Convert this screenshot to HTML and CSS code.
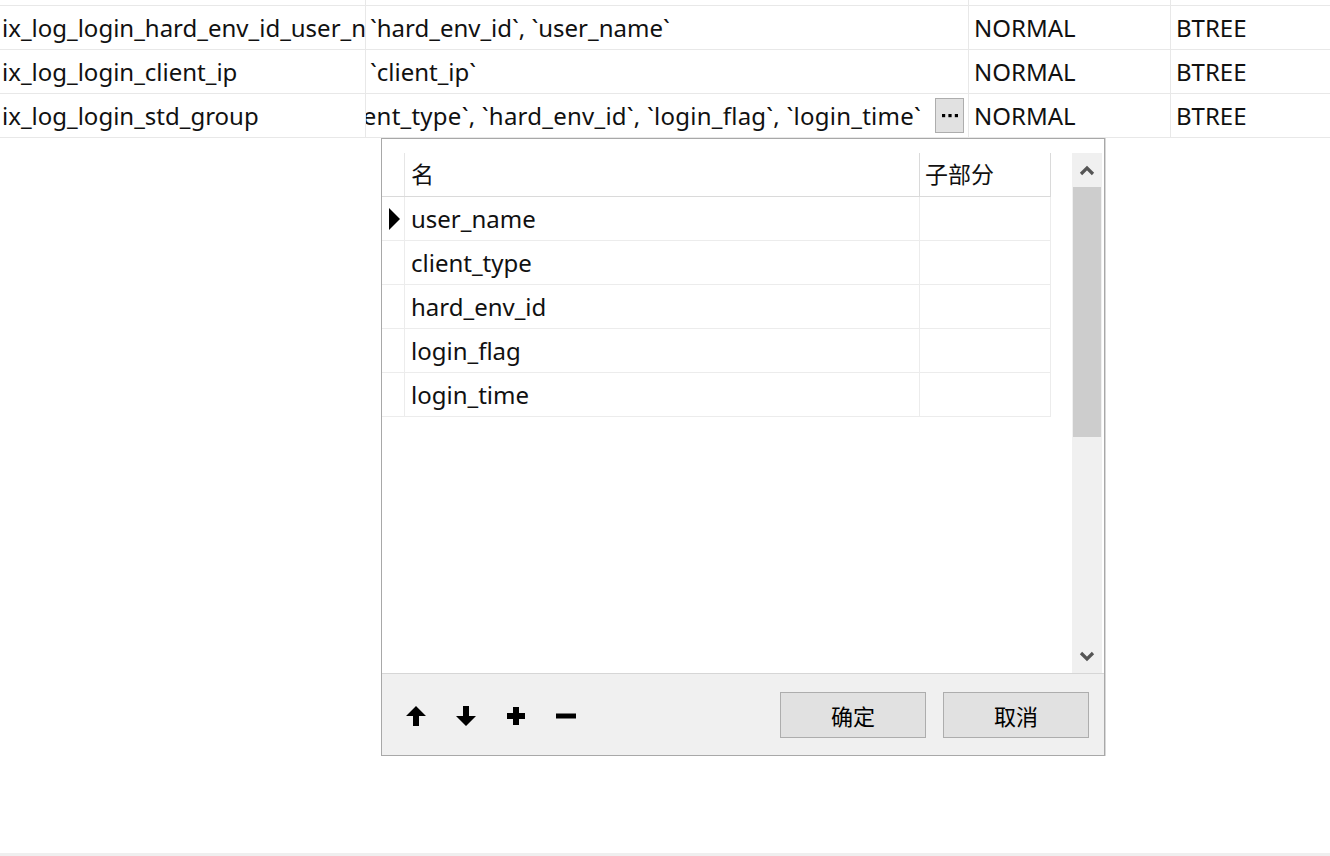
FILE: index.html
```html
<!DOCTYPE html>
<html lang="zh">
<head>
<meta charset="utf-8">
<title>索引字段</title>
<link rel="stylesheet" href="styles.css">
</head>
<body>
<div class="page">
  <div class="idx-table">
    <div class="row row-cut">
      <div class="cell c1"></div><div class="cell c2"></div><div class="cell c3"></div><div class="cell c4"></div>
    </div>
    <div class="row">
      <div class="cell c1"><span class="clip">ix_log_login_hard_env_id_user_name</span></div>
      <div class="cell c2">`hard_env_id`, `user_name`</div>
      <div class="cell c3">NORMAL</div>
      <div class="cell c4">BTREE</div>
    </div>
    <div class="row">
      <div class="cell c1">ix_log_login_client_ip</div>
      <div class="cell c2">`client_ip`</div>
      <div class="cell c3">NORMAL</div>
      <div class="cell c4">BTREE</div>
    </div>
    <div class="row">
      <div class="cell c1">ix_log_login_std_group</div>
      <div class="cell c2 c2-edit">
        <span class="edit-text">`user_name`, `client_type`, `hard_env_id`, `login_flag`, `login_time`</span>
        <span class="dots-btn"><svg width="16" height="4" viewBox="0 0 16 4"><rect x="0" y="0" width="3.2" height="3.2" fill="#000"/><rect x="6.4" y="0" width="3.2" height="3.2" fill="#000"/><rect x="12.8" y="0" width="3.2" height="3.2" fill="#000"/></svg></span>
      </div>
      <div class="cell c3">NORMAL</div>
      <div class="cell c4">BTREE</div>
    </div>
  </div>
  <div class="spacer"></div>
  <div class="bottom-strip"></div>
</div>

<div class="dialog">
  <div class="dlg-body">
    <div class="fields">
      <div class="frow fhead">
        <div class="fc ind"></div>
        <div class="fc name">名</div>
        <div class="fc sub">子部分</div>
      </div>
      <div class="frow">
        <div class="fc ind"><span class="tri"></span></div>
        <div class="fc name">user_name</div>
        <div class="fc sub"></div>
      </div>
      <div class="frow">
        <div class="fc ind"></div>
        <div class="fc name">client_type</div>
        <div class="fc sub"></div>
      </div>
      <div class="frow">
        <div class="fc ind"></div>
        <div class="fc name">hard_env_id</div>
        <div class="fc sub"></div>
      </div>
      <div class="frow">
        <div class="fc ind"></div>
        <div class="fc name">login_flag</div>
        <div class="fc sub"></div>
      </div>
      <div class="frow">
        <div class="fc ind"></div>
        <div class="fc name">login_time</div>
        <div class="fc sub"></div>
      </div>
    </div>
    <div class="vscroll">
      <div class="sb-btn">
        <svg width="16" height="11" viewBox="0 0 16 11"><path d="M2 9 L8 3 L14 9" fill="none" stroke="#555" stroke-width="3.2"/></svg>
      </div>
      <div class="sb-thumb"></div>
      <div class="sb-track"></div>
      <div class="sb-btn">
        <svg width="16" height="11" viewBox="0 0 16 11"><path d="M2 2 L8 8 L14 2" fill="none" stroke="#555" stroke-width="3.2"/></svg>
      </div>
    </div>
  </div>
  <div class="dlg-foot">
    <div class="tools">
      <svg class="tool" width="22" height="22" viewBox="0 0 22 22"><path d="M11 1 L21 11 L14 11 L14 21 L8 21 L8 11 L1 11 Z" fill="#000"/></svg>
      <svg class="tool" width="22" height="22" viewBox="0 0 22 22"><path d="M11 21 L21 11 L14 11 L14 1 L8 1 L8 11 L1 11 Z" fill="#000"/></svg>
      <svg class="tool" width="22" height="22" viewBox="0 0 22 22"><path d="M8 2 H14 V8 H20 V14 H14 V20 H8 V14 H2 V8 H8 Z" fill="#000"/></svg>
      <svg class="tool" width="22" height="22" viewBox="0 0 22 22"><rect x="1" y="8.5" width="20" height="5" fill="#000"/></svg>
    </div>
    <div class="btns">
      <button class="btn">确定</button>
      <button class="btn">取消</button>
    </div>
  </div>
</div>
</body>
</html>
```

FILE: styles.css
```css
* { box-sizing: border-box; }
html, body { margin: 0; padding: 0; }
body {
  width: 1330px;
  height: 856px;
  overflow: hidden;
  background: #ffffff;
  color: #111;
  font-family: "Noto Sans", "Noto Sans CJK SC", sans-serif;
  font-size: 24px;
}
.page {
  height: 856px;
  display: flex;
  flex-direction: column;
}
.idx-table { display: flex; flex-direction: column; }
.row {
  display: flex;
  height: 44px;
  border-bottom: 1px solid #e8e8e8;
}
.row-cut { height: 6px; }
.cell {
  height: 100%;
  display: flex;
  align-items: center;
  white-space: nowrap;
  overflow: hidden;
  border-right: 1px solid #e8e8e8;
}
.clip { overflow: hidden; white-space: nowrap; min-width: 0; }
.c1 { width: 366px; padding-left: 2px; }
.c2 { width: 603px; padding-left: 4px; }
.c3 { width: 202px; padding-left: 5px; }
.c4 { flex: 1; padding-left: 5px; border-right: none; }
.c2-edit { justify-content: flex-end; padding-left: 0; padding-right: 4px; }
.edit-text { flex-shrink: 0; margin-right: 14px; letter-spacing: 0.25px; }
.dots-btn {
  flex-shrink: 0;
  width: 29px;
  height: 35px;
  background: #e1e1e1;
  border: 1px solid #adadad;
  display: flex;
  align-items: center;
  justify-content: center;
}
.dots-btn svg { display: block; }
.spacer { flex: 1; }
.bottom-strip { height: 3px; background: #efefef; }

.dialog {
  position: absolute;
  left: 381px;
  top: 138px;
  width: 724px;
  height: 618px;
  border: 1px solid #a8a8a8;
  background: #fff;
  display: flex;
  flex-direction: column;
  box-shadow: 1px 0 0 #d8d8d8;
}
.dlg-body {
  flex: 1;
  display: flex;
  padding-top: 14px;
  padding-right: 2px;
  gap: 21px;
  border-bottom: 1px solid #d6d6d6;
}
.fields { width: 669px; display: flex; flex-direction: column; }
.frow { display: flex; height: 44px; border-bottom: 1px solid #ececec; }
.fhead { border-bottom: 1px solid #dadada; }
.fc {
  height: 100%;
  display: flex;
  align-items: center;
  border-right: 1px solid #ececec;
  white-space: nowrap;
}
.fhead .fc { border-right-color: #dadada; padding-bottom: 3px; }
.fhead .ind { border-right-color: #e6e6e6; }
.fhead .name, .fhead .sub { font-family: "Noto Sans CJK SC", sans-serif; font-size: 23px; }
.ind { width: 23px; justify-content: center; }
.name { width: 515px; padding-left: 6px; }
.sub { width: 131px; padding-left: 5px; }
.tri {
  width: 0; height: 0;
  border-top: 11px solid transparent;
  border-bottom: 11px solid transparent;
  border-left: 11px solid #000;
  margin-left: 3px;
}
.vscroll {
  width: 30px;
  display: flex;
  flex-direction: column;
  background: #f0f0f0;
}
.sb-btn {
  height: 34px;
  display: flex;
  align-items: center;
  justify-content: center;
}
.sb-thumb { height: 250px; background: #cdcdcd; margin: 0 1px; }
.sb-track { flex: 1; }
.dlg-foot {
  height: 81px;
  background: #f0f0f0;
  display: flex;
  align-items: center;
  justify-content: space-between;
  padding: 0 15px 0 23px;
}
.tools { display: flex; gap: 28px; align-items: center; padding-top: 2px; }
.tool { display: block; }
.btns { display: flex; gap: 17px; }
.btn {
  width: 146px;
  height: 46px;
  background: #e1e1e1;
  border: 1px solid #adadad;
  font-family: "Noto Sans CJK SC", sans-serif;
  font-size: 22px;
  color: #000;
  padding: 0;
}
```
